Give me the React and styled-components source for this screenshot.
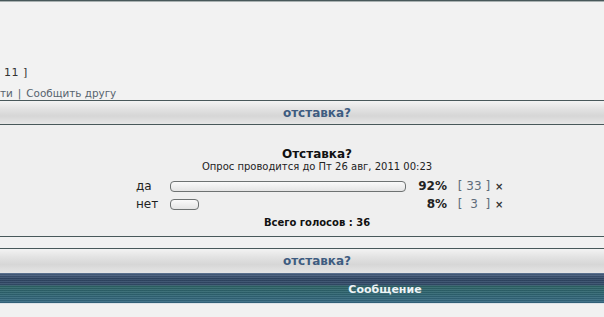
import React from 'react';
import styled, { createGlobalStyle } from 'styled-components';

const Global = createGlobalStyle`
  html, body {
    margin: 0;
    padding: 0;
    background: #f1f1f1;
  }
  body {
    font-family: "DejaVu Sans", Verdana, sans-serif;
    color: #222;
    overflow: hidden;
  }
`;

const Page = styled.div`
  width: 604px;
  height: 317px;
  overflow: hidden;
  display: flex;
  flex-direction: column;
`;

const Rule = styled.div`
  height: 1px;
  background: #48585a;
  box-shadow: 0 1px 0 #a9b1b1;
  flex: none;
`;

const PostBody = styled.div`
  height: 98px;
  margin-top: 1px;
  background: #f2f2f2;
  display: flex;
  flex-direction: column;
  justify-content: flex-end;
  box-sizing: border-box;
`;

const Counter = styled.div`
  font-size: 11px;
  line-height: 14px;
  color: #333;
  padding-left: 4px;
  margin-bottom: 6px;
  letter-spacing: 0.5px;
`;

const Links = styled.div`
  font-size: 10.4px;
  line-height: 14px;
  color: #56636e;
  display: flex;
  gap: 5px;
`;

const CatHead = styled.div`
  height: ${p => p.$h}px;
  background: linear-gradient(#f3f3f3 0%, #e2e2e2 35%, #d6d6d6 65%, #e6e6e6 100%);
  display: flex;
  align-items: center;
  justify-content: center;
  padding-left: 30px;
  font-size: 12px;
  font-weight: bold;
  color: #3e5c80;
  flex: none;
`;

const PollPanel = styled.div`
  height: 111px;
  background: #efefef;
  padding: 22px 0 0 30px;
  box-sizing: border-box;
  display: flex;
  flex-direction: column;
  align-items: center;
  flex: none;
`;

const PollTitle = styled.div`
  font-size: 12px;
  font-weight: bold;
  line-height: 14px;
  color: #111;
`;

const PollInfo = styled.div`
  font-size: 10px;
  line-height: 12px;
  color: #222;
`;

const Options = styled.div`
  display: grid;
  grid-template-columns: 44px 236px 41px 48px 10px;
  align-items: center;
  margin-top: 4px;
  margin-left: -3px;
`;

const OptLabel = styled.div`
  font-size: 12px;
  line-height: 18px;
  color: #222;
  padding-left: 10px;
`;

const BarCell = styled.div`
  display: flex;
  align-items: center;
  height: 18px;
`;

const Bar = styled.div`
  height: 9px;
  border: 1px solid #6e7272;
  border-radius: 4px;
  background: linear-gradient(#fafafa, #e4e4e4);
`;

const Pct = styled.div`
  font-size: 12px;
  font-weight: bold;
  text-align: right;
  color: #222;
`;

const Count = styled.div`
  font-size: 12px;
  color: #5e6c7a;
  padding-left: 6px;
  text-align: center;
  white-space: pre;
`;

const Cross = styled.div`
  font-size: 10px;
  font-weight: bold;
  color: #333;
`;

const Total = styled.div`
  font-size: 10px;
  font-weight: bold;
  line-height: 12px;
  margin-top: 4px;
  color: #111;
`;

const Gap = styled.div`
  height: 11px;
  background: #f1f1f1;
  flex: none;
`;

const TableHead = styled.div`
  height: 30px;
  flex: none;
  display: grid;
  grid-template-columns: 166px 1fr;
  background:
    repeating-linear-gradient(#ffffff14 0 1px, #00000014 1px 2px),
    linear-gradient(#4f6787 0%, #2f4664 20%, #344c6a 38%, #2e6467 45%, #2f6572 70%, #366882 100%);
`;

const HeadCell = styled.div`
  display: flex;
  align-items: center;
  justify-content: center;
  padding-top: 3px;
  font-size: 11px;
  font-weight: bold;
  color: #eef4f6;
`;

const Footer = styled.div`
  flex: 1;
  background: #f1f1f1;
  border-top: 1px solid #dde3e8;
`;

const options = [
  { label: 'да', width: 236, pct: '92%', count: '33' },
  { label: 'нет', width: 29, pct: '8%', count: ' 3 ' },
];

export default function App() {
  return (
    <Page>
      <Global />
      <Rule />
      <PostBody>
        <Counter>11 ]</Counter>
        <Links>
          <span>ти</span>
          <span>|</span>
          <span>Сообщить другу</span>
        </Links>
      </PostBody>
      <Rule />
      <CatHead $h={23}>отставка?</CatHead>
      <Rule />
      <PollPanel>
        <PollTitle>Отставка?</PollTitle>
        <PollInfo>Опрос проводится до Пт 26 авг, 2011 00:23</PollInfo>
        <Options>
          {options.map(o => (
            <React.Fragment key={o.label}>
              <OptLabel>{o.label}</OptLabel>
              <BarCell>
                <Bar style={{ width: o.width - 2 }} />
              </BarCell>
              <Pct>{o.pct}</Pct>
              <Count>[ {o.count} ]</Count>
              <Cross>×</Cross>
            </React.Fragment>
          ))}
        </Options>
        <Total>Всего голосов : 36</Total>
      </PollPanel>
      <Rule />
      <Gap />
      <Rule />
      <CatHead $h={24}>отставка?</CatHead>
      <TableHead>
        <HeadCell />
        <HeadCell>Сообщение</HeadCell>
      </TableHead>
      <Footer />
    </Page>
  );
}
